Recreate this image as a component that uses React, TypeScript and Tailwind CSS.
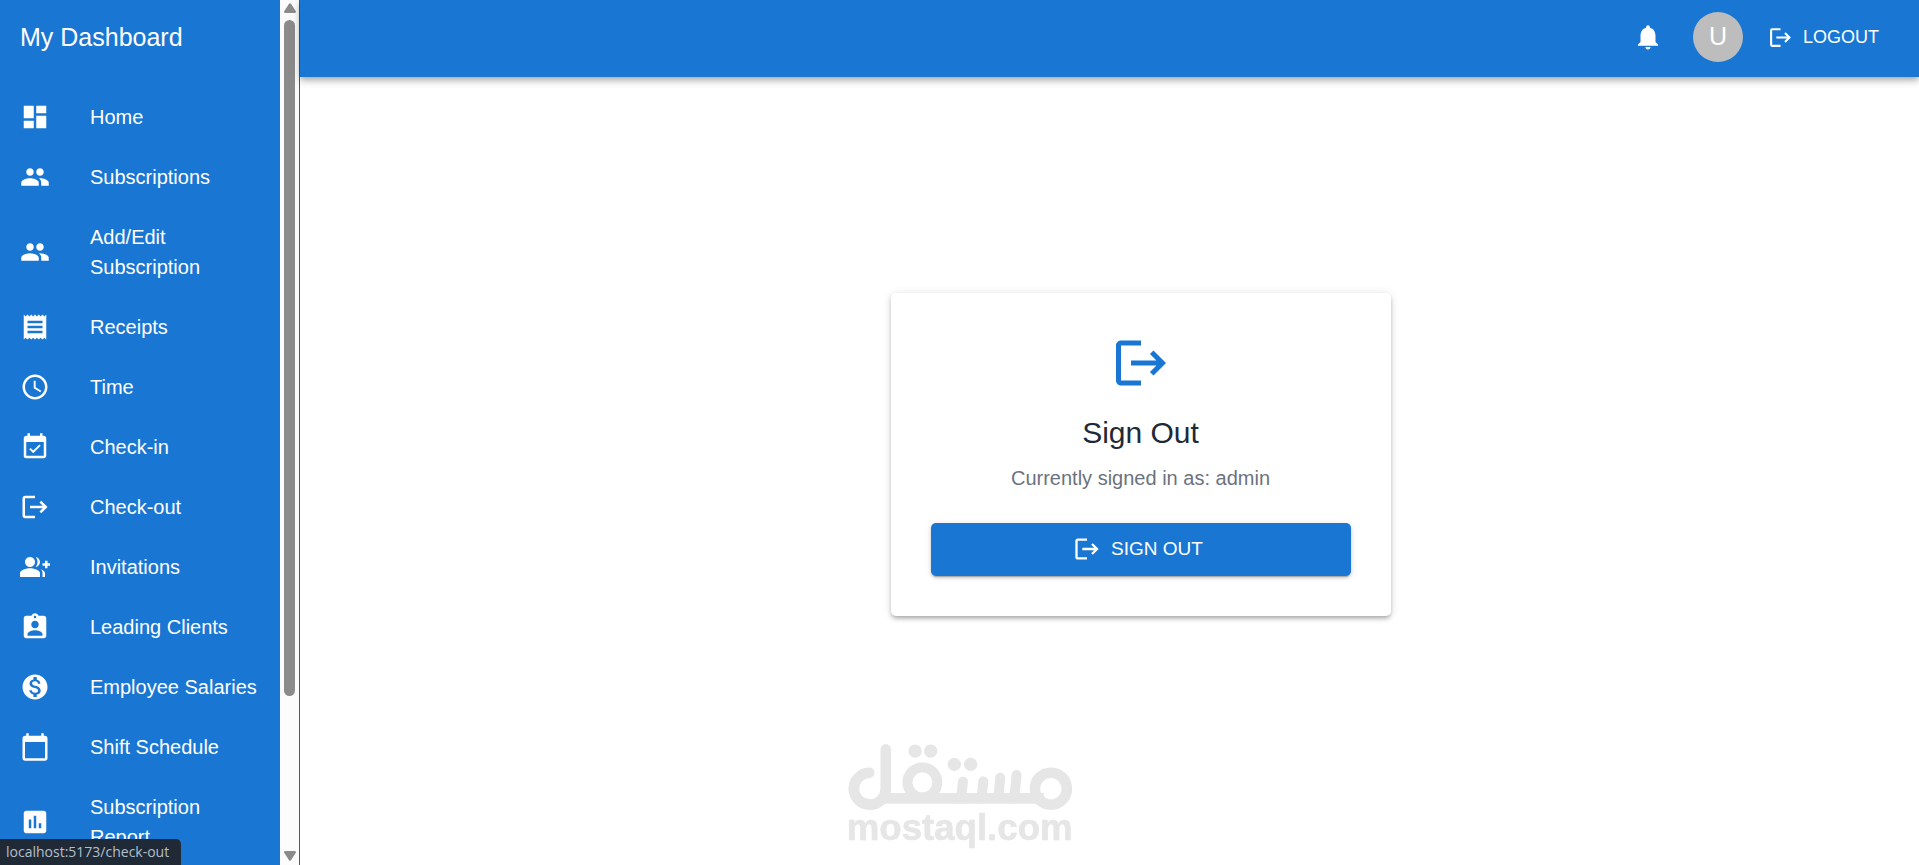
import type { ComponentType } from "react";
import {
  MdAccessTime,
  MdAssessment,
  MdAssignmentInd,
  MdCalendarToday,
  MdDashboard,
  MdEventAvailable,
  MdMonetizationOn,
  MdNotifications,
  MdPeople,
  MdReceipt,
} from "react-icons/md";

type IconProps = { className?: string };

function LogoutIcon({ className }: IconProps) {
  return (
    <svg viewBox="0 0 24 24" fill="currentColor" className={className} aria-hidden="true">
      <path d="m17 7-1.41 1.41L18.17 11H8v2h10.17l-2.58 2.58L17 17l5-5zM4 5h8V3H4c-1.1 0-2 .9-2 2v14c0 1.1.9 2 2 2h8v-2H4z" />
    </svg>
  );
}

function GroupAddIcon({ className }: IconProps) {
  return (
    <svg viewBox="0 0 24 24" fill="currentColor" className={className} aria-hidden="true">
      <path d="M22 9V7h-2v2h-2v2h2v2h2v-2h2V9z" />
      <path d="M8 12c2.21 0 4-1.79 4-4s-1.79-4-4-4-4 1.79-4 4 1.79 4 4 4m0 1c-2.67 0-8 1.34-8 4v3h16v-3c0-2.66-5.33-4-8-4" />
      <path d="M12.51 4.05C13.43 5.11 14 6.49 14 8s-.57 2.89-1.49 3.95C14.47 11.7 16 10.04 16 8s-1.53-3.7-3.49-3.95m4.02 9.78C17.42 14.66 18 15.7 18 17v3h2v-3c0-1.45-1.59-2.51-3.47-3.17" />
    </svg>
  );
}

const navItems: { label: string; href: string; icon: ComponentType<IconProps> }[] = [
  { label: "Home", href: "/", icon: MdDashboard },
  { label: "Subscriptions", href: "/subscriptions", icon: MdPeople },
  { label: "Add/Edit Subscription", href: "/add-subscription", icon: MdPeople },
  { label: "Receipts", href: "/receipts", icon: MdReceipt },
  { label: "Time", href: "/time", icon: MdAccessTime },
  { label: "Check-in", href: "/check-in", icon: MdEventAvailable },
  { label: "Check-out", href: "/check-out", icon: LogoutIcon },
  { label: "Invitations", href: "/invitations", icon: GroupAddIcon },
  { label: "Leading Clients", href: "/leading-clients", icon: MdAssignmentInd },
  { label: "Employee Salaries", href: "/employee-salaries", icon: MdMonetizationOn },
  { label: "Shift Schedule", href: "/shift-schedule", icon: MdCalendarToday },
  { label: "Subscription Report", href: "/subscription-report", icon: MdAssessment },
];

function Sidebar() {
  return (
    <aside className="flex w-[300px] shrink-0 border-r border-[#1565c0] bg-[#1976d2] text-white">
      <div className="min-w-0 flex-1 overflow-y-auto [scrollbar-width:none]">
        <h1 className="px-5 pt-5 pb-[22px] text-[25px] leading-[35px]">My Dashboard</h1>
        <nav className="py-2.5">
          <ul>
            {navItems.map(({ label, href, icon: Icon }) => (
              <li key={href}>
                <a href={href} className="flex items-center py-[15px] pr-4 pl-5 text-xl leading-[30px]">
                  <Icon className="mr-10 size-[30px] shrink-0" />
                  <span>{label}</span>
                </a>
              </li>
            ))}
          </ul>
        </nav>
      </div>
      <ScrollTrack />
    </aside>
  );
}

function ScrollTrack() {
  return (
    <div className="flex w-[19px] shrink-0 flex-col items-center bg-[#fcfcfc] pt-[3px] pb-1 text-[#8b8b8b]" aria-hidden="true">
      <svg viewBox="0 0 12 10" className="h-2.5 w-3" fill="currentColor">
        <path d="M5 .8q1-1.3 2 0L11.7 8q.7 2-1 2H1.3q-1.7 0-1-2z" />
      </svg>
      <div className="my-[7px] flex-1">
        <div className="h-[82%] w-[11px] rounded-full bg-[#8b8b8b]" />
      </div>
      <svg viewBox="0 0 12 10" className="h-2.5 w-3 rotate-180" fill="currentColor">
        <path d="M5 .8q1-1.3 2 0L11.7 8q.7 2-1 2H1.3q-1.7 0-1-2z" />
      </svg>
    </div>
  );
}

function TopBar() {
  return (
    <header className="flex items-center justify-end gap-5 bg-[#1976d2] pt-3 pr-[35px] pb-[15px] text-white shadow-[0_2px_5px_-1px_rgba(0,0,0,0.2),0_5px_6px_0_rgba(0,0,0,0.14),0_1px_12px_0_rgba(0,0,0,0.12)]">
      <button type="button" aria-label="Notifications" className="flex size-[50px] items-center justify-center rounded-full">
        <MdNotifications className="size-[30px]" />
      </button>
      <div className="flex size-[50px] items-center justify-center rounded-full bg-[#bdbdbd] text-[25px]">U</div>
      <button type="button" className="flex items-center gap-2.5 px-[5px] py-2 text-lg uppercase">
        <LogoutIcon className="size-[25px]" />
        Logout
      </button>
    </header>
  );
}

function SignOutCard() {
  return (
    <section className="flex w-full max-w-[500px] flex-col items-center rounded-[5px] bg-white p-10 shadow-[0_3px_4px_-2px_rgba(0,0,0,0.2),0_3px_4px_0_rgba(0,0,0,0.14),0_1px_10px_0_rgba(0,0,0,0.12)]">
      <LogoutIcon className="size-[60px] text-[#1976d2]" />
      <h2 className="mt-5 text-3xl leading-10 text-[#1f2937]">Sign Out</h2>
      <p className="mt-2.5 text-xl leading-[30px] text-[#6b7280]">Currently signed in as: admin</p>
      <button
        type="button"
        className="mt-[30px] flex h-[53px] w-full items-center justify-center gap-2.5 rounded-[5px] bg-[#1976d2] text-[19px] uppercase text-white shadow-[0_3px_1px_-2px_rgba(0,0,0,0.2),0_2px_3px_0_rgba(0,0,0,0.14),0_1px_6px_0_rgba(0,0,0,0.12)]"
      >
        <LogoutIcon className="-ml-[5px] size-7" />
        Sign Out
      </button>
    </section>
  );
}

function Watermark() {
  return (
    <svg
      viewBox="50 42 676 315"
      className="pointer-events-none fixed bottom-4 left-1/2 h-[105px] w-[225px] -translate-x-1/2"
      role="img"
      aria-label="mostaql.com"
    >
      <g fill="none" stroke="#e6e6e6" strokeWidth="32" strokeLinecap="round">
        <circle cx="661" cy="176" r="48" />
        <path d="M115 128A48 48 0 1 0 165 176V58" />
        <path d="M150 205H640" strokeLinecap="butt" />
        <circle cx="275" cy="157" r="45" strokeWidth="30" />
        <path d="M397 155L391 205M458 154L453 205M509 143L503 205M558 135L551 205" strokeWidth="30" />
      </g>
      <g fill="#e6e6e6">
        <circle cx="253" cy="63" r="20" />
        <circle cx="300" cy="63" r="20" />
        <circle cx="371" cy="103" r="20" />
        <circle cx="420" cy="103" r="20" />
        <text
          x="387"
          y="329"
          textAnchor="middle"
          fontSize="110"
          fontWeight="700"
          stroke="#e6e6e6"
          strokeWidth="2"
          strokeLinejoin="round"
        >
          mostaql.com
        </text>
      </g>
    </svg>
  );
}

export default function App() {
  return (
    <div className="flex h-screen overflow-hidden bg-white font-['Liberation_Sans',Arial,sans-serif]">
      <Sidebar />
      <div className="flex min-w-0 flex-1 flex-col">
        <TopBar />
        <main className="flex flex-1 items-center justify-center pb-[34px] pl-[62px]">
          <SignOutCard />
        </main>
      </div>
      <Watermark />
      <div className="fixed bottom-0 left-0 rounded-tr-[5px] bg-[#1f2a36] pr-3 pl-1.5 font-['Open_Sans',sans-serif] text-sm leading-[26px] text-[#b4bfcc]">
        localhost:5173/check-out
      </div>
    </div>
  );
}
